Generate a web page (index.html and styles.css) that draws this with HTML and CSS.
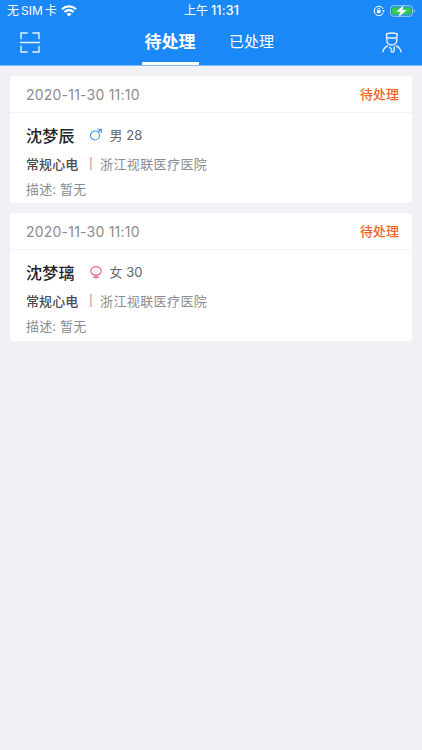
FILE: index.html
```html
<!DOCTYPE html>
<html lang="zh-CN">
<head>
<meta charset="utf-8">
<title>待处理</title>
<link rel="stylesheet" href="styles.css">
</head>
<body>
<header class="header">
  <div class="status">
    <div class="carrier"><span class="carrier-name">无<span class="sim">SIM</span>卡</span>
      <svg class="wifi" width="16" height="12" viewBox="0 0 16 12" fill="none" stroke="#fff" stroke-width="2.2"><path d="M1 4.200a10.200 10.200 0 0 1 14 0M3.500 7a6.500 6.500 0 0 1 9 0"/><path d="M8 11.600 5.500 9.100a3.600 3.600 0 0 1 5 0z" fill="#fff" stroke="none"/></svg>
    </div>
    <div class="clock"><span class="clock-half">上午</span><span class="clock-time">11:31</span></div>
    <div class="indicators">
      <svg width="12" height="12" viewBox="0 0 12 12" fill="none" stroke="#fff"><path d="M10.200 4A4.700 4.700 0 1 0 10.300 7.700"/><path d="m8.900 5.200 3 0-1.500 2z" fill="#fff" stroke="none"/><path d="M4.600 5.500V4.400a1.100 1.100 0 0 1 2.200 0v1.100" stroke-width=".8"/><rect x="3.900" y="5.200" width="3.600" height="3" fill="#fff" stroke="none"/></svg>
      <svg width="26" height="12" viewBox="0 0 26 12"><rect x=".5" y=".7" width="22" height="10.600" rx="3" fill="none" stroke="#9bcbfc"/><rect x="2" y="2.200" width="19" height="7.600" rx="1.700" fill="#36c759"/><path d="M23.800 4.300c1.600.4 1.600 3 0 3.400z" fill="#9bcbfc"/><path d="M13.800 0 6.300 6.800h3.900L8.800 12l7.900-7.100h-4.300z" fill="#fff"/></svg>
    </div>
  </div>
  <nav class="nav">
    <svg class="scan" width="20" height="21" viewBox="0 0 20 21" fill="none" stroke="#e6f2ff" stroke-width="1.400"><path d="M1 7.200V1h6.700M12.300 1H19v6.200M19 13.800V20h-6.700M7.700 20H1v-6.200M0 10.500h20"/></svg>
    <div class="tabs"><span class="tab active">待处理</span><span class="tab">已处理</span></div>
    <svg class="doctor" width="20" height="21" viewBox="0 0 20 21" fill="none" stroke="#e6f2ff" stroke-width="1.400" stroke-linecap="round" stroke-linejoin="round"><path d="M4.800 6 4.400 1.900Q10 .1 15.200 1.900L14.800 6zM4.800 6v2.600c0 2.500 2.300 4.400 5 4.400s5-1.900 5-4.400V6M5.600 14C3.200 15 1.500 17 .9 19.700M14.300 14c2.400 1 4.100 3 4.700 5.700M7.700 15.300l2.100 2.200M12.200 15v3.200q0 1.800-1.600 1.800-1.200 0-1.700-.9"/></svg>
  </nav>
</header>
<main class="list">
  <article class="card">
    <div class="card-head"><time>2020-11-30 11:10</time><span class="state">待处理</span></div>
    <div class="patient"><strong class="name">沈梦辰</strong>
      <svg width="12" height="13" viewBox="0 0 12 13" fill="none" stroke="#3b95ee" stroke-width="1.100"><circle cx="5" cy="7.500" r="4.500"/><path d="m8 4.500 3-3M7.500 1.300h3.800v3.800"/></svg>
      <span class="person">男 28</span></div>
    <div class="exam"><span class="type">常规心电</span><span class="bar">|</span><span>浙江视联医疗医院</span></div>
    <div class="desc">描述: 暂无</div>
  </article>
  <article class="card">
    <div class="card-head"><time>2020-11-30 11:10</time><span class="state">待处理</span></div>
    <div class="patient"><strong class="name">沈梦璃</strong>
      <svg class="female" width="12" height="13" viewBox="0 0 12 13" fill="none" stroke="#ef6793" stroke-width="1.200"><ellipse cx="6" cy="4.900" rx="5.200" ry="4.300"/><path d="M6 9.200v3.800M2.800 11.200h6.400"/></svg>
      <span class="person">女 30</span></div>
    <div class="exam"><span class="type">常规心电</span><span class="bar">|</span><span>浙江视联医疗医院</span></div>
    <div class="desc">描述: 暂无</div>
  </article>
</main>
</body>
</html>
```
FILE: styles.css
```css
* { box-sizing: border-box; }
body {
  margin: 0;
  min-height: 750px;
  background: #f0f0f5;
  font-family: Inter, "Noto Sans CJK SC", sans-serif;
  font-size: 13px;
  color: #8c8c90;
}
svg { display: block; flex: none; }
.header { height: 66px; background: #1b88f8; color: #fff; border-bottom: 1px solid #80bffa; }
.status {
  display: grid;
  grid-template-columns: 1fr auto 1fr;
  align-items: center;
  height: 22px;
  padding: 0 6px 0 7px;
}
.carrier { display: flex; align-items: center; gap: 4px; font-size: 12px; line-height: 20px; }
.carrier svg { margin-top: -1px; }
.sim { margin: 0 2px; letter-spacing: 0; }
.clock { display: flex; gap: 3px; font-size: 12px; line-height: 20px; }
.clock-time { font-size: 12.5px; font-weight: 500; letter-spacing: .2px; }
.indicators { display: flex; justify-content: flex-end; align-items: center; gap: 5px; }
.nav {
  display: flex;
  justify-content: space-between;
  height: 43px;
  padding: 0 20px;
}
.scan, .doctor { margin-top: 10px; }
.tabs { display: flex; gap: 27px; margin-right: 3px; }
.tab { width: 52px; height: 43px; font-size: 15px; line-height: 39px; text-align: center; white-space: nowrap; }
.tab.active { width: 57px; font-size: 17px; line-height: 40px; font-weight: 700; border-bottom: 3px solid #fff; }
.list { display: flex; flex-direction: column; gap: 10px; padding: 10px 10.400px; }
.card { height: 127.400px; background: #fff; border-radius: 3px; }
.card-head {
  display: flex;
  justify-content: space-between;
  align-items: center;
  height: 37px;
  padding: 0 12.500px 0 15.600px;
  border-bottom: 1px solid #f3f3f5;
}
.card-head time { font-size: 14px; letter-spacing: .22px; }
.state { color: #ed6424; font-weight: 500; line-height: 20px; }
.patient { display: flex; align-items: center; height: 43px; padding-left: 15.600px; }
.name { width: 64.400px; color: #262628; font-size: 16px; font-weight: 500; letter-spacing: .2px; }
.female { margin-top: 2px; }
.person { margin-left: 7.200px; color: #646468; }
.exam { display: flex; height: 20px; line-height: 20px; margin-top: -2px; padding-left: 15.600px; letter-spacing: .4px; }
.type { width: 63px; color: #4c4c50; font-weight: 500; letter-spacing: .1px; }
.bar { width: 11px; font-size: 11px; line-height: 21px; }
.desc { margin-top: 5px; padding-left: 15.600px; line-height: 20px; letter-spacing: .15px; }
```
